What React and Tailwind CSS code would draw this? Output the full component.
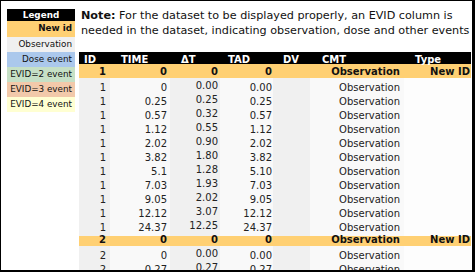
import React from "react";

const font = { fontFamily: '"DejaVu Sans", Verdana, sans-serif' };

const legend = [
  { label: "New id", cls: "bg-[#ffd073] font-bold h-[16px]" },
  { label: "Observation", cls: "bg-[#f0f0f0] h-[15px]" },
  { label: "Dose event", cls: "bg-[#abc8ec] h-[15px]" },
  { label: "EVID=2 event", cls: "bg-[#c6e0c6] h-[15px]" },
  { label: "EVID=3 event", cls: "bg-[#f2c9aa] h-[15px]" },
  { label: "EVID=4 event", cls: "bg-[#ffffd2] h-[15px]" },
];

// time, dT, tad
const rows = [
  { id: 1, newId: true },
  { id: 1, t: "0", dt: "0.00", tad: "0.00" },
  { id: 1, t: "0.25", dt: "0.25", tad: "0.25" },
  { id: 1, t: "0.57", dt: "0.32", tad: "0.57" },
  { id: 1, t: "1.12", dt: "0.55", tad: "1.12" },
  { id: 1, t: "2.02", dt: "0.90", tad: "2.02" },
  { id: 1, t: "3.82", dt: "1.80", tad: "3.82" },
  { id: 1, t: "5.1", dt: "1.28", tad: "5.10" },
  { id: 1, t: "7.03", dt: "1.93", tad: "7.03" },
  { id: 1, t: "9.05", dt: "2.02", tad: "9.05" },
  { id: 1, t: "12.12", dt: "3.07", tad: "12.12" },
  { id: 1, t: "24.37", dt: "12.25", tad: "24.37" },
  { id: 2, newId: true },
  { id: 2, t: "0", dt: "0.00", tad: "0.00" },
  { id: 2, t: "0.27", dt: "0.27", tad: "0.27" },
  { id: 2, t: "0.51", dt: "0.24", tad: "0.51" },
];

const cols = "grid grid-cols-[31px_60px_50px_53px_37px_94px_67px]";

function Row({ r }) {
  if (r.newId) {
    return (
      <div className={`${cols} h-[14px] items-center bg-[#ffd073] font-bold text-[#111]`}>
        <div className="text-right pr-[4px]">{r.id}</div>
        <div className="text-right pr-[3px]">0</div>
        <div className="text-right pr-[2px]">0</div>
        <div className="text-right pr-[1px]">0</div>
        <div></div>
        <div className="text-right pr-[4px]">Observation</div>
        <div className="text-right pr-[1px]">New ID</div>
      </div>
    );
  }
  return (
    <div className={`${cols} h-[14px] text-[#222]`}>
      <div className="bg-[#f0f0f0] flex items-center justify-end pr-[4px]">{r.id}</div>
      <div className="bg-[#f9f9f9] flex items-center justify-end pr-[3px]">{r.t}</div>
      <div className="bg-[#f0f0f0] flex items-center justify-end pr-[2px] pb-[3px]">{r.dt}</div>
      <div className="bg-[#f9f9f9] flex items-center justify-end pr-[1px]">{r.tad}</div>
      <div className="bg-[#f0f0f0]"></div>
      <div className="bg-[#f9f9f9] flex items-center justify-end pr-[4px]">Observation</div>
      <div className="bg-[#fdfdfd]"></div>
    </div>
  );
}

export default function App() {
  return (
    <div
      className="w-[475px] h-[272px] overflow-hidden bg-white border-l border-t border-black border-r-[3px] border-b-2 box-border"
      style={font}
    >
      <div className="flex gap-[4px] pl-[6px] pt-[8px]">
        {/* legend */}
        <div className="w-[68px] shrink-0 text-[8.8px] text-[#111]">
          <div className="h-[12px] bg-black text-white font-bold text-center leading-[12px]">
            Legend
          </div>
          {legend.map((l) => (
            <div key={l.label} className={`${l.cls} flex items-center justify-end pr-[3px] whitespace-nowrap`}>
              {l.label}
            </div>
          ))}
        </div>

        {/* note + table */}
        <div className="flex-1 min-w-0">
          <p className="pl-[2px] text-[11.2px] leading-[15px] text-[#111] -mt-[1px]">
            <span className="font-bold">Note:</span> For the dataset to be displayed properly, an EVID column is{" "}
            <span className="whitespace-nowrap">needed in the dataset, indicating observation, dose and other events</span>
          </p>
          <div className="mt-[14px] w-[392px] text-[10px]">
            <div className={`${cols} h-[12px] items-center bg-black text-white font-bold`}>
              <div className="pl-[5px]">ID</div>
              <div className="pl-[11px]">TIME</div>
              <div className="pl-[11px]">ΔT</div>
              <div className="pl-[8px]">TAD</div>
              <div className="pl-[10px]">DV</div>
              <div className="pl-[12px]">CMT</div>
              <div className="pl-[11px]">Type</div>
            </div>
            {rows.map((r, i) => (
              <Row key={i} r={r} />
            ))}
          </div>
        </div>
      </div>
    </div>
  );
}
